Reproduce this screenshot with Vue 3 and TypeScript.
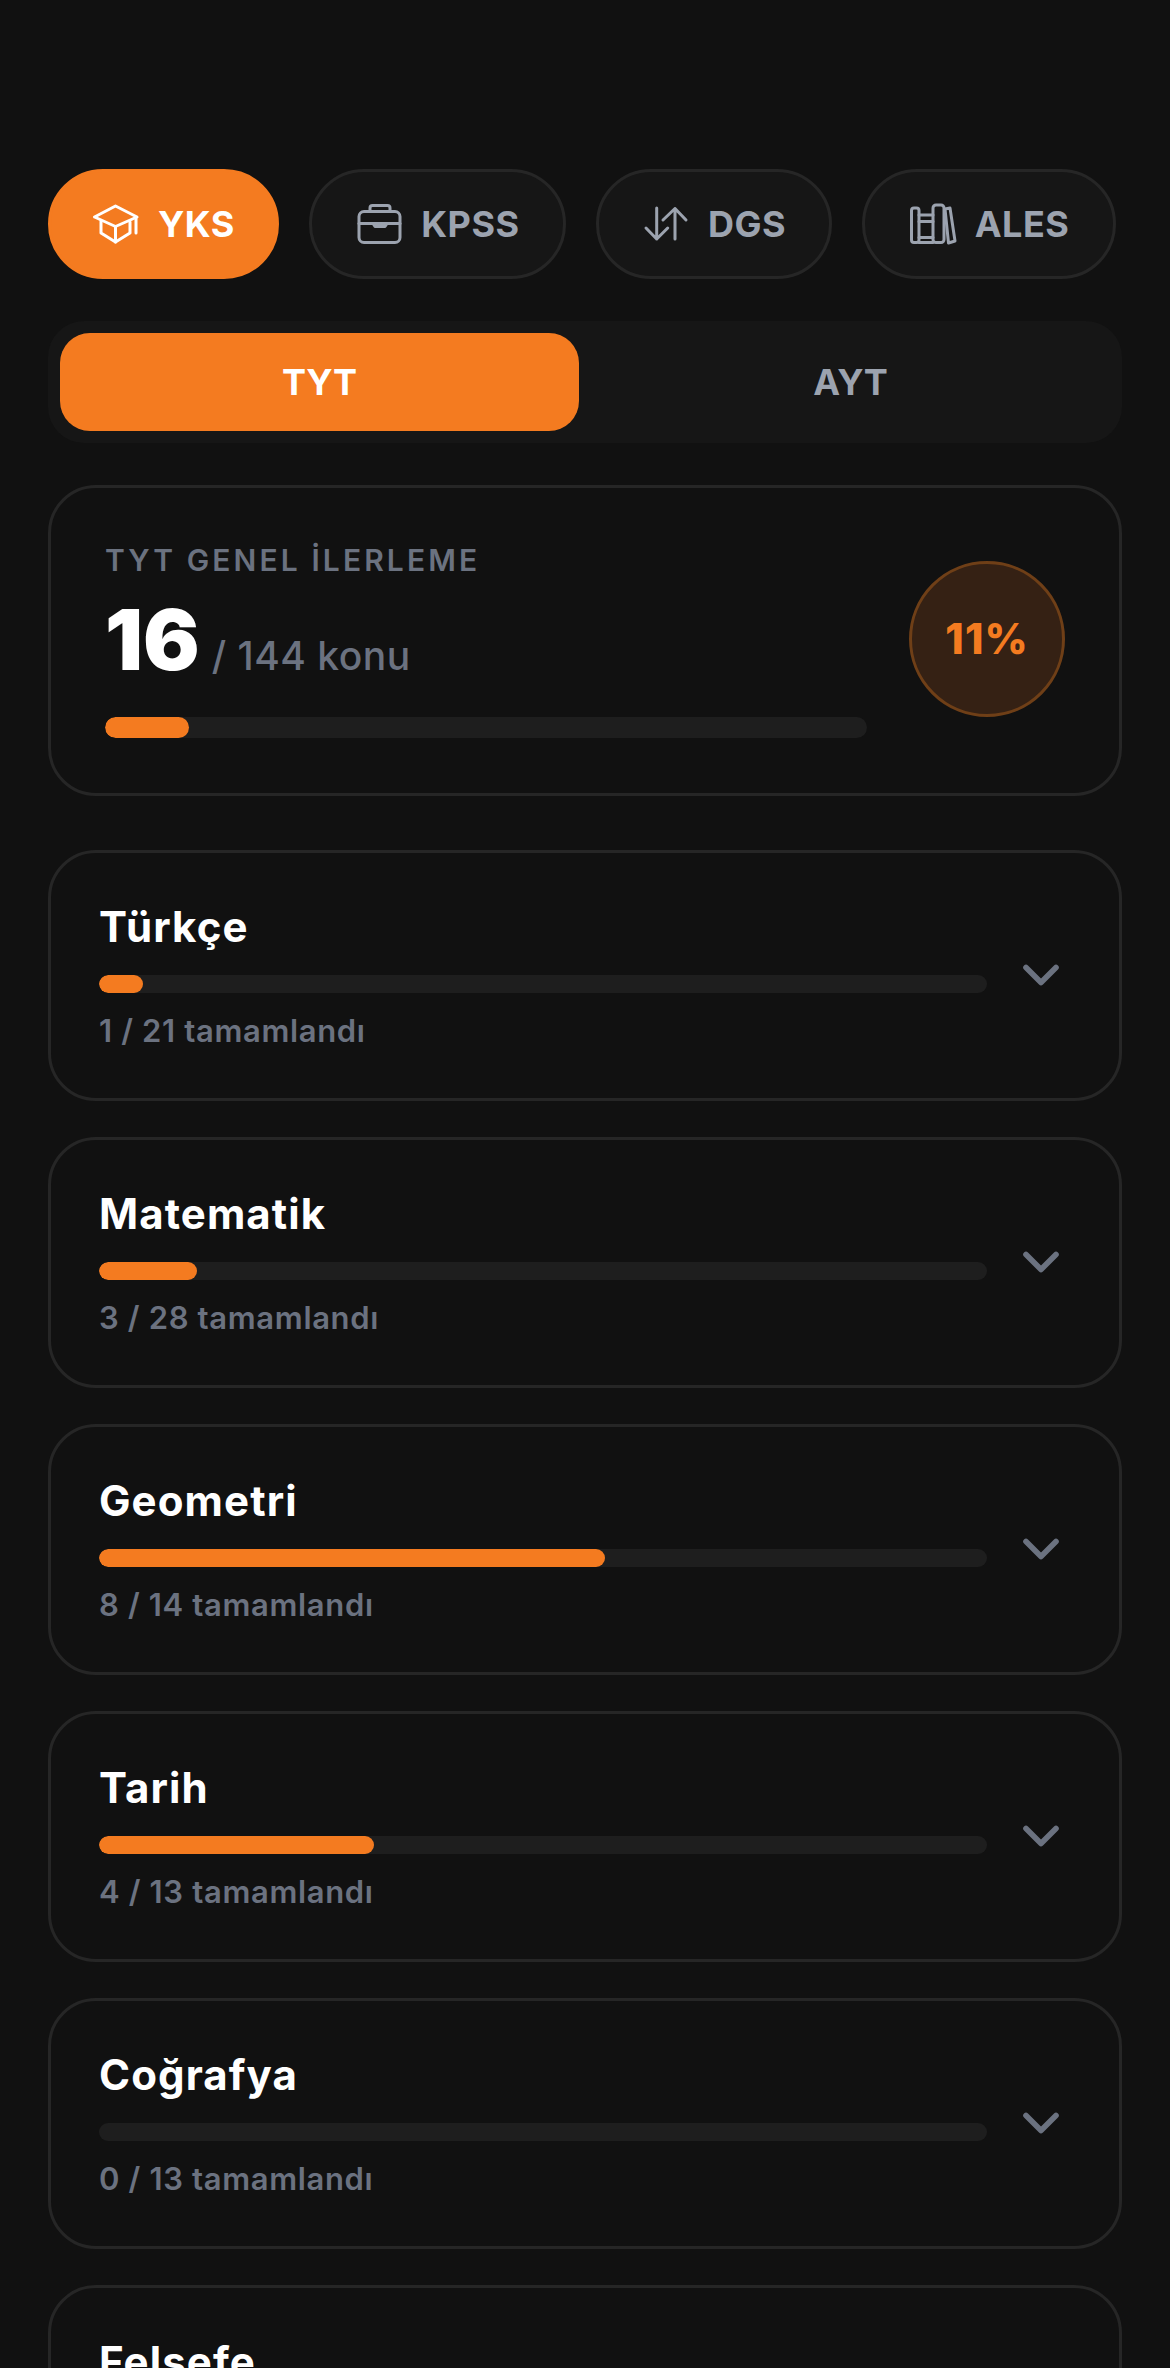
<script setup lang="ts">
import { ref } from "vue";

interface Topic {
  name: string;
  done: number;
  total: number;
}

const exams = ["YKS", "KPSS", "DGS", "ALES"];
const activeExam = ref("YKS");
const activeTab = ref("TYT");

const topics: Topic[] = [
  { name: "Türkçe", done: 1, total: 21 },
  { name: "Matematik", done: 3, total: 28 },
  { name: "Geometri", done: 8, total: 14 },
  { name: "Tarih", done: 4, total: 13 },
  { name: "Coğrafya", done: 0, total: 13 },
  { name: "Felsefe", done: 0, total: 12 },
];

const percent = (done: number, total: number) => `${Math.round((done / total) * 100)}%`;
</script>

<template>
  <div class="page">
    <!-- Exam pills -->
    <div class="exams">
      <button
        v-for="exam in exams"
        :key="exam"
        class="exam-pill"
        :class="{ active: activeExam === exam }"
        @click="activeExam = exam"
      >
        <svg class="exam-icon" viewBox="0 0 48 48" fill="none" stroke="currentColor" stroke-width="3" stroke-linecap="round" stroke-linejoin="round">
          <template v-if="exam === 'YKS'">
            <path d="M23.5 6 2.5 17l21 9.5L45 17z" />
            <path d="M9 21v12l14.5 9L38 33V22" />
            <path d="M23.5 26.500v15.500" />
            <path d="M44 18v15" />
          </template>
          <template v-else-if="exam === 'KPSS'">
            <rect x="4" y="11.500" width="41" height="31" rx="5" />
            <path d="M15 11V8a2.500 2.500 0 0 1 2.500-2.500h15A2.500 2.500 0 0 1 35 8v3" />
            <path d="M4 23.500h41" />
            <path d="M18 23.500h14l-2 3h-10z" fill="currentColor" />
          </template>
          <template v-else-if="exam === 'DGS'">
            <path d="M14.700 8v31M4 28l10.700 11L25.700 28" />
            <path d="M33 39V8.500M21 20 33 8.500 44 20" />
          </template>
          <template v-else>
            <rect x="2.500" y="8" width="7.500" height="34.500" rx="2.500" />
            <path d="M10 15h14M10 21.500h14M10 37.500h14M10 42.500h14" />
            <rect x="24" y="5" width="11" height="37.500" rx="3" />
            <path d="M36 9l5-1 5 33-6.500 2z" />
          </template>
        </svg>
        <span>{{ exam }}</span>
      </button>
    </div>

    <!-- TYT / AYT -->
    <div class="tabs">
      <button
        v-for="tab in ['TYT', 'AYT']"
        :key="tab"
        class="tab"
        :class="{ active: activeTab === tab }"
        @click="activeTab = tab"
      >
        {{ tab }}
      </button>
    </div>

    <!-- Overall progress -->
    <section class="overview">
      <div class="overview-main">
        <div class="overview-label">TYT GENEL İLERLEME</div>
        <div class="overview-count">
          <strong>16</strong>
          <span>/ 144 konu</span>
        </div>
        <div class="track track-lg">
          <div class="fill" :style="{ width: percent(16, 144) }"></div>
        </div>
      </div>
      <div class="overview-badge">11%</div>
    </section>

    <!-- Topic list -->
    <div class="topics">
      <article v-for="topic in topics" :key="topic.name" class="topic">
        <div class="topic-body">
          <h3 class="topic-name">{{ topic.name }}</h3>
          <div class="track">
            <div class="fill" :style="{ width: percent(topic.done, topic.total) }"></div>
          </div>
          <div class="topic-sub">{{ topic.done }} / {{ topic.total }} tamamlandı</div>
        </div>
        <svg class="chevron" viewBox="0 0 24 24" fill="none" stroke="currentColor" stroke-width="2.250" stroke-linecap="round" stroke-linejoin="round">
          <path d="m6 9 6 6 6-6" />
        </svg>
      </article>
    </div>
  </div>
</template>

<style scoped>
.page {
  height: 2368px;
  overflow: hidden;
  box-sizing: border-box;
  padding: 169px 48px 0;
  font-family: Inter, "Noto Sans", sans-serif;
  color: #fff;
}

button {
  font-family: inherit;
  cursor: pointer;
}

.exams {
  display: flex;
  gap: 30px;
  margin-bottom: 42px;
}

.exam-pill {
  display: flex;
  align-items: center;
  gap: 18px;
  height: 110px;
  padding: 0 43.250px;
  border: 3px solid #262626;
  border-radius: 55px;
  background: #161616;
  color: #9ca3af;
  font-size: 36px;
  font-weight: 700;
  letter-spacing: 0.500px;
}

.exam-pill.active {
  padding: 0 41px;
  background: #f47b20;
  border-color: #f47b20;
  color: #fff;
}

.exam-icon {
  width: 48px;
  height: 48px;
  flex-shrink: 0;
}

.tabs {
  display: grid;
  grid-template-columns: 1fr 1fr;
  gap: 12px;
  padding: 12px;
  border-radius: 36px;
  background: #161616;
  margin-bottom: 42px;
}

.tab {
  height: 98px;
  border: none;
  border-radius: 30px;
  background: transparent;
  color: #9ca3af;
  font-size: 36px;
  font-weight: 700;
}

.tab.active {
  background: #f47b20;
  color: #fff;
}

.overview {
  display: flex;
  align-items: center;
  gap: 42px;
  padding: 52px 54px 55px;
  border: 3px solid #262626;
  border-radius: 48px;
  margin-bottom: 54px;
}

.overview-main {
  flex: 1;
}

.overview-label {
  font-size: 30px;
  line-height: 40px;
  font-weight: 600;
  letter-spacing: 3.100px;
  color: #6b7280;
}

.overview-count {
  display: flex;
  align-items: baseline;
  gap: 12px;
  margin-top: 12px;
  margin-bottom: 12.500px;
  line-height: 96px;
}

.overview-count strong {
  font-size: 84px;
  font-weight: 900;
}

.overview-count span {
  font-size: 39px;
  font-weight: 500;
  letter-spacing: 0.500px;
  color: #6b7280;
}

.overview-badge {
  display: flex;
  align-items: center;
  justify-content: center;
  box-sizing: border-box;
  width: 156px;
  height: 156px;
  flex-shrink: 0;
  border: 3px solid #6f3f17;
  border-radius: 50%;
  background: #352114;
  color: #f47b20;
  font-size: 42px;
  font-weight: 800;
  letter-spacing: 1px;
}

.track {
  height: 18px;
  border-radius: 9px;
  background: #1e1e1e;
  overflow: hidden;
}

.track-lg {
  height: 21px;
  border-radius: 10.500px;
}

.fill {
  height: 100%;
  border-radius: inherit;
  background: #f47b20;
}

.topics {
  display: flex;
  flex-direction: column;
  gap: 36px;
}

.topic {
  display: flex;
  align-items: center;
  gap: 24px;
  flex-shrink: 0;
  box-sizing: border-box;
  height: 251px;
  padding: 0 48px;
  border: 3px solid #262626;
  border-radius: 48px;
}

.topic-body {
  flex: 1;
  margin-top: -3px;
}

.topic-name {
  margin: 0 0 17px;
  font-size: 42px;
  line-height: 63px;
  font-weight: 700;
  letter-spacing: 1.100px;
}

.topic-sub {
  margin-top: 15px;
  font-size: 31px;
  line-height: 45px;
  font-weight: 600;
  letter-spacing: 0.650px;
  color: #6b7280;
}

.chevron {
  width: 60px;
  height: 60px;
  flex-shrink: 0;
  color: #6b7280;
}
</style>

<style>
html,
body {
  background: #111111;
  overflow: hidden;
}
</style>
